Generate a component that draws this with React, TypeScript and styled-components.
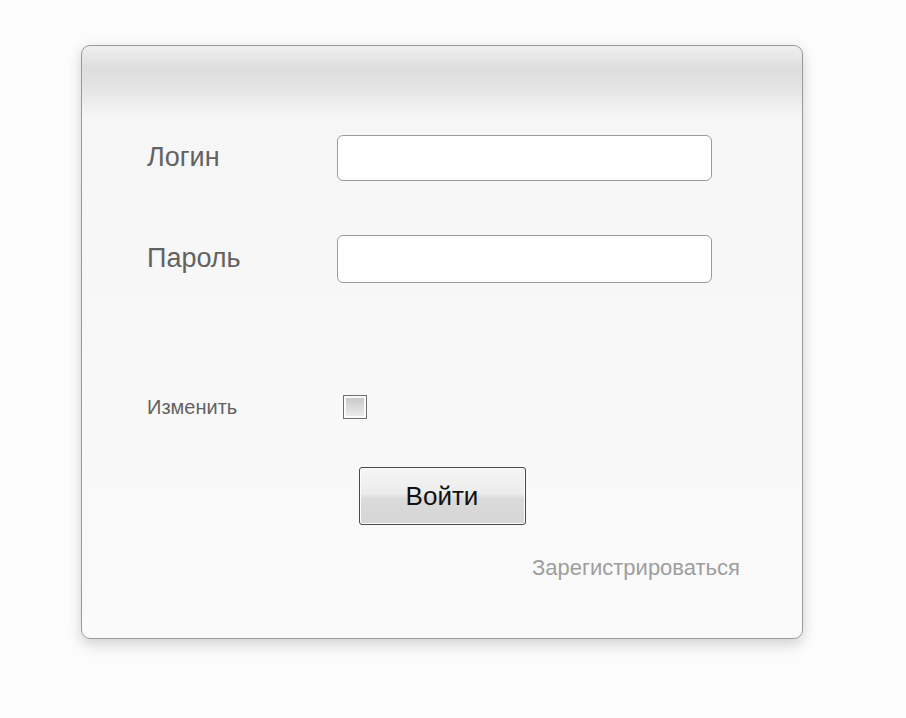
import React, { useState } from 'react'
import styled, { createGlobalStyle } from 'styled-components'

const GlobalStyle = createGlobalStyle`
    html, body {
        margin: 0;
        padding: 0;
        background: #fcfcfc;
        font-family: "Liberation Sans", Arial, sans-serif;
    }
`

const Page = styled.div`
    width: 906px;
    height: 718px;
    padding: 45px 0 0 81px;
    box-sizing: border-box;
`

const Card = styled.div`
    width: 722px;
    height: 594px;
    box-sizing: border-box;
    border: 1px solid #9a9a9a;
    border-radius: 9px;
    background: linear-gradient(to bottom, #efefef 0px, #dedede 22px, #e2e2e2 38px, #f6f6f6 72px, #fafafa 100%);
    box-shadow: 0 7px 14px rgba(0, 0, 0, 0.13), 0 0 14px rgba(0, 0, 0, 0.06);
    padding: 89px 62px 0 65px;
    display: flex;
    flex-direction: column;
`

const Fields = styled.div`
    display: grid;
    grid-template-columns: 190px 375px;
    grid-template-rows: 46px 48px;
    row-gap: 54px;
    align-items: center;
`

const Label = styled.label<{ $small?: boolean }>`
    font-size: ${p => (p.$small ? '20px' : '27px')};
    color: #626262;
    margin-top: ${p => (p.$small ? '0' : '-2px')};
`

const Input = styled.input`
    height: 100%;
    box-sizing: border-box;
    border: 1px solid #9c9c9c;
    border-radius: 6px;
    background: #fff;
    outline: none;
    padding: 0 10px;
    font-size: 18px;
`

const CheckRow = styled.div`
    display: grid;
    grid-template-columns: 196px 24px;
    align-items: center;
    height: 24px;
    margin-top: 112px;
`

const Check = styled.input`
    appearance: none;
    width: 24px;
    height: 24px;
    margin: 0;
    border: 1px solid #6e6e6e;
    box-shadow: inset 0 0 0 2px #fafafa;
    background: linear-gradient(to bottom, #c6c6c6, #eeeeee);
    box-sizing: border-box;
`

const ButtonRow = styled.div`
    display: flex;
    justify-content: center;
    margin-top: 48px;
    padding-right: 3px;
`

const Button = styled.button`
    width: 167px;
    height: 58px;
    border: 1px solid #4a4a4a;
    border-radius: 3px;
    background: linear-gradient(to bottom, #f6f6f6 0%, #ececec 45%, #dadada 55%, #d6d6d6 100%);
    box-shadow: inset 0 0 0 1px #fdfdfd;
    font-family: "Liberation Sans", Arial, sans-serif;
    font-size: 26px;
    color: #111;
    cursor: pointer;
`

const LinkRow = styled.div`
    display: flex;
    justify-content: flex-end;
    margin-top: 30px;
`

const Register = styled.a`
    font-size: 22px;
    color: #9e9e9e;
    text-decoration: none;
    cursor: pointer;
`

const App: React.FC = () => {
    const [login, setLogin] = useState('')
    const [password, setPassword] = useState('')
    const [change, setChange] = useState(false)

    return (
        <>
            <GlobalStyle />
            <Page>
                <Card>
                    <Fields>
                        <Label htmlFor='login'>Логин</Label>
                        <Input id='login' value={login} onChange={e => setLogin(e.target.value)} />
                        <Label htmlFor='password'>Пароль</Label>
                        <Input id='password' type='password' value={password} onChange={e => setPassword(e.target.value)} />
                    </Fields>
                    <CheckRow>
                        <Label $small htmlFor='change'>Изменить</Label>
                        <Check id='change' type='checkbox' checked={change} onChange={() => setChange(!change)} />
                    </CheckRow>
                    <ButtonRow>
                        <Button>Войти</Button>
                    </ButtonRow>
                    <LinkRow>
                        <Register>Зарегистрироваться</Register>
                    </LinkRow>
                </Card>
            </Page>
        </>
    )
}

export default App
